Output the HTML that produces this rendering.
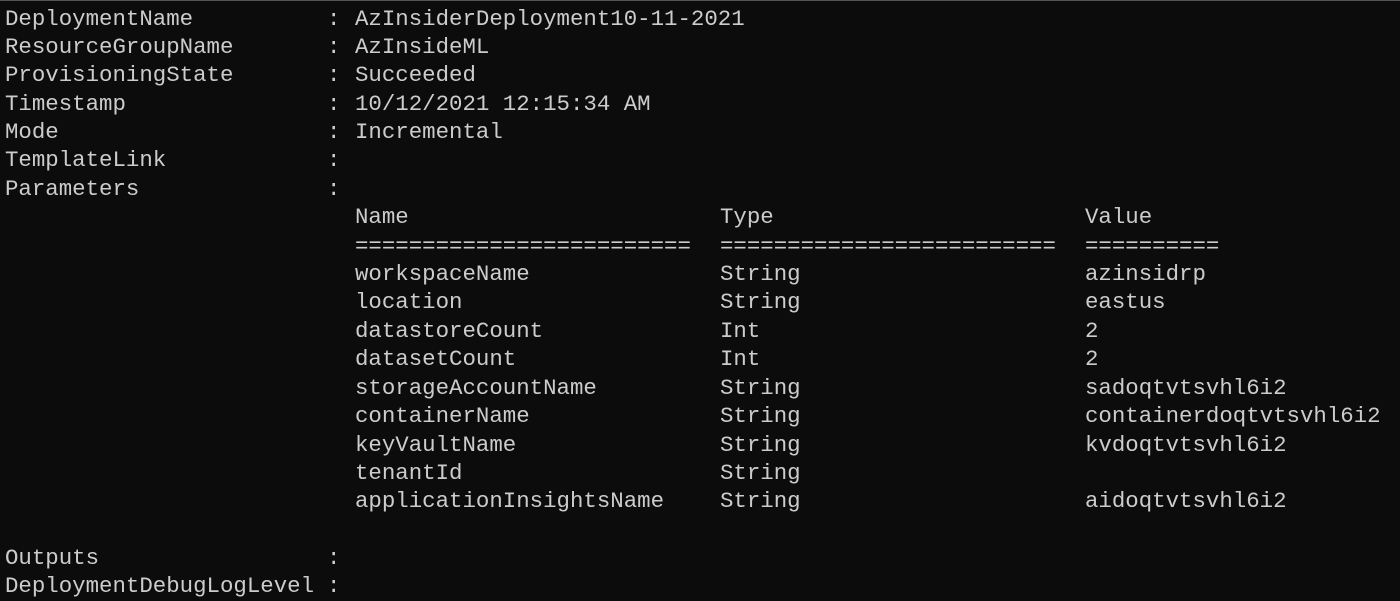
<!DOCTYPE html>
<html><head><style>
html,body{margin:0;padding:0;background:#0c0c0c;width:1400px;height:601px;overflow:hidden}
body{border-top:1px solid #555;box-sizing:border-box;position:relative}
.l{position:absolute;left:0;height:28px;width:1400px;font-family:"Liberation Mono",monospace;font-size:22.4px;line-height:28px;color:#cccccc;white-space:pre}
.l span{position:absolute;top:0}
.a{left:5px}.c{left:327px}.v{left:355px}.t{left:720px}.x{left:1085px}
</style></head><body>
<div class="l" style="top:4px"><span class="a">DeploymentName</span><span class="c">:</span><span class="v">AzInsiderDeployment10-11-2021</span></div>
<div class="l" style="top:32px"><span class="a">ResourceGroupName</span><span class="c">:</span><span class="v">AzInsideML</span></div>
<div class="l" style="top:60px"><span class="a">ProvisioningState</span><span class="c">:</span><span class="v">Succeeded</span></div>
<div class="l" style="top:89px"><span class="a">Timestamp</span><span class="c">:</span><span class="v">10/12/2021 12:15:34 AM</span></div>
<div class="l" style="top:117px"><span class="a">Mode</span><span class="c">:</span><span class="v">Incremental</span></div>
<div class="l" style="top:145px"><span class="a">TemplateLink</span><span class="c">:</span></div>
<div class="l" style="top:174px"><span class="a">Parameters</span><span class="c">:</span></div>
<div class="l" style="top:202px"><span class="v">Name</span><span class="t">Type</span><span class="x">Value</span></div>
<div class="l" style="top:231px"><span class="v">=========================</span><span class="t">=========================</span><span class="x">==========</span></div>
<div class="l" style="top:259px"><span class="v">workspaceName</span><span class="t">String</span><span class="x">azinsidrp</span></div>
<div class="l" style="top:287px"><span class="v">location</span><span class="t">String</span><span class="x">eastus</span></div>
<div class="l" style="top:316px"><span class="v">datastoreCount</span><span class="t">Int</span><span class="x">2</span></div>
<div class="l" style="top:344px"><span class="v">datasetCount</span><span class="t">Int</span><span class="x">2</span></div>
<div class="l" style="top:373px"><span class="v">storageAccountName</span><span class="t">String</span><span class="x">sadoqtvtsvhl6i2</span></div>
<div class="l" style="top:401px"><span class="v">containerName</span><span class="t">String</span><span class="x">containerdoqtvtsvhl6i2</span></div>
<div class="l" style="top:430px"><span class="v">keyVaultName</span><span class="t">String</span><span class="x">kvdoqtvtsvhl6i2</span></div>
<div class="l" style="top:458px"><span class="v">tenantId</span><span class="t">String</span></div>
<div class="l" style="top:486px"><span class="v">applicationInsightsName</span><span class="t">String</span><span class="x">aidoqtvtsvhl6i2</span></div>
<div class="l" style="top:543px"><span class="a">Outputs</span><span class="c">:</span></div>
<div class="l" style="top:571px"><span class="a">DeploymentDebugLogLevel</span><span class="c">:</span></div>
</body></html>
